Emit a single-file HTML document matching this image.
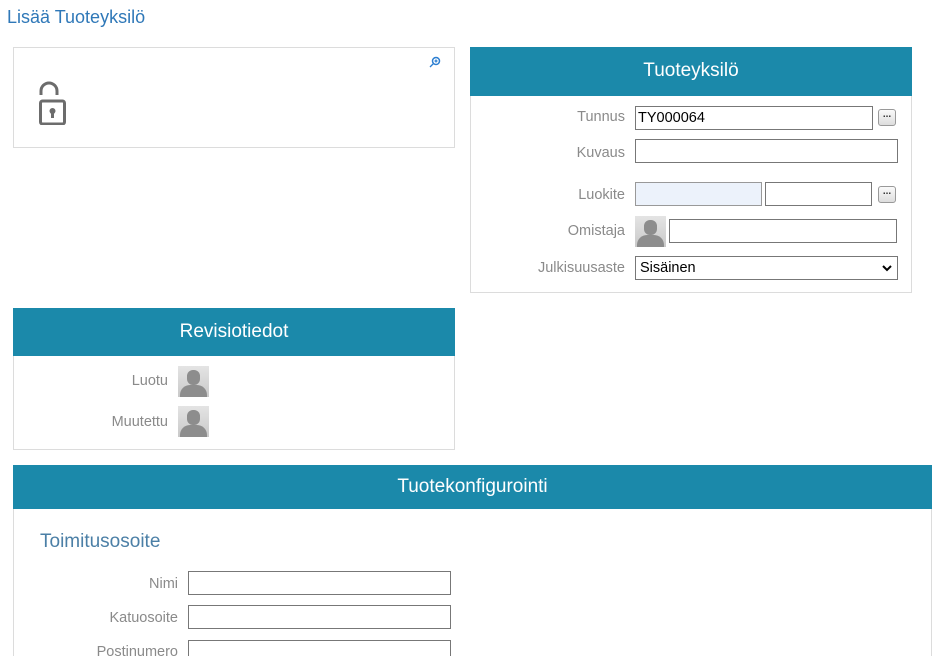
<!DOCTYPE html>
<html><head><meta charset="utf-8"><style>
*{box-sizing:border-box;margin:0;padding:0}
html{overflow:hidden;height:656px}
body{width:939px;height:656px;overflow:hidden;background:#fff;font-family:"Liberation Sans",sans-serif;position:relative}
.a{position:absolute}
.box{position:absolute;border:1px solid #dcdcdc;background:#fff}
.hd{position:absolute;left:-1px;right:-1px;top:-1px;background:#1b89aa;color:#fff;font-size:19px;text-align:center}
.lbl{position:absolute;color:#8a8a8a;font-size:14.5px;text-align:right}
.inp{position:absolute;border:1px solid #777;background:#fff;height:24px;font-size:14.5px;padding:3px 2px;color:#000}
.btn{position:absolute;width:18px;height:17px;border:1px solid #999;border-radius:3px;background:linear-gradient(#fafafa,#ddd);font-size:10px;line-height:10px;text-align:center;color:#333;font-weight:bold}
.av{position:absolute;width:31px;height:31px;background:linear-gradient(#e4e4e4,#c9c9c9);overflow:hidden}
.av:before{content:"";position:absolute;left:9px;top:4px;width:13px;height:15px;border-radius:6px;background:#8d8d8d}
.av:after{content:"";position:absolute;left:2px;top:19px;width:27px;height:16px;border-radius:10px 10px 0 0;background:#8d8d8d}
</style></head><body>
<div class="a" style="left:7px;top:7px;font-size:18px;color:#2f78b8">Lisää Tuoteyksilö</div>

<div class="box" style="left:13px;top:47px;width:442px;height:101px">
 <svg class="a" style="left:415px;top:8px" width="12" height="12" viewBox="0 0 12 12"><circle cx="7" cy="5" r="3.5" fill="none" stroke="#2b7ed1" stroke-width="1.5"/><path d="M5 7L1 11M7 3.5v3M5.5 5h3" stroke="#2b7ed1" stroke-width="1.3"/></svg>
 <svg class="a" style="left:23px;top:33px" width="30" height="44" viewBox="0 0 30 44"><path d="M4 14V10a8 8 0 0 1 16 0v4" fill="none" stroke="#6c6c6c" stroke-width="3"/><rect x="3.5" y="20" width="24" height="23" rx="2" fill="none" stroke="#6c6c6c" stroke-width="3"/><circle cx="15.5" cy="30" r="3" fill="#6c6c6c"/><rect x="14" y="30" width="3" height="7" fill="#6c6c6c"/></svg>
</div>

<div class="box" style="left:470px;top:47px;width:442px;height:246px">
 <div class="hd" style="height:49px;line-height:48px">Tuoteyksilö</div>
</div>
<div class="lbl" style="left:500px;width:125px;top:109px">Tunnus</div>
<div class="inp" style="left:635px;top:106px;width:238px">TY000064</div>
<div class="btn" style="left:878px;top:109px">...</div>
<div class="lbl" style="left:500px;width:125px;top:145px">Kuvaus</div>
<div class="inp" style="left:635px;top:139px;width:263px"></div>
<div class="lbl" style="left:500px;width:125px;top:187px">Luokite</div>
<div class="inp" style="left:635px;top:182px;width:127px;background:#ecf2fb;border-color:#999"></div>
<div class="inp" style="left:765px;top:182px;width:107px"></div>
<div class="btn" style="left:878px;top:186px">...</div>
<div class="lbl" style="left:500px;width:125px;top:223px">Omistaja</div>
<div class="av" style="left:635px;top:216px"></div>
<div class="inp" style="left:669px;top:219px;width:228px"></div>
<div class="lbl" style="left:500px;width:125px;top:260px">Julkisuusaste</div>
<div class="inp" style="left:635px;top:256px;width:263px;padding-left:4px">Sisäinen<svg class="a" style="right:5px;top:8px" width="10" height="7" viewBox="0 0 10 7"><path d="M1 1l4 4 4-4" fill="none" stroke="#000" stroke-width="2"/></svg></div>

<div class="box" style="left:13px;top:308px;width:442px;height:142px">
 <div class="hd" style="height:48px;line-height:47px">Revisiotiedot</div>
</div>
<div class="lbl" style="left:50px;width:118px;top:373px">Luotu</div>
<div class="av" style="left:178px;top:366px"></div>
<div class="lbl" style="left:50px;width:118px;top:414px">Muutettu</div>
<div class="av" style="left:178px;top:406px"></div>

<div class="box" style="left:13px;top:465px;width:919px;height:200px">
 <div class="hd" style="height:44px;line-height:43px">Tuotekonfigurointi</div>
</div>
<div class="a" style="left:40px;top:531px;font-size:19px;color:#4b7fa6">Toimitusosoite</div>
<div class="lbl" style="left:50px;width:128px;top:576px">Nimi</div>
<div class="inp" style="left:188px;top:571px;width:263px"></div>
<div class="lbl" style="left:50px;width:128px;top:610px">Katuosoite</div>
<div class="inp" style="left:188px;top:605px;width:263px"></div>
<div class="lbl" style="left:50px;width:128px;top:644px">Postinumero</div>
<div class="inp" style="left:188px;top:640px;width:263px"></div>
</body></html>
